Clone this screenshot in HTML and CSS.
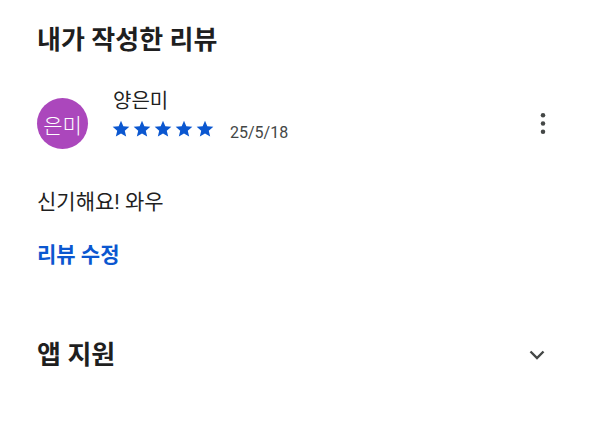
FILE: index.html
```html
<!DOCTYPE html>
<html lang="ko">
<head>
  <meta charset="utf-8">
  <title>내가 작성한 리뷰</title>
  <link rel="stylesheet" href="styles.css">
</head>
<body>
  <main class="page">
    <section class="my-review">
      <h2 class="section-title">내가 작성한 리뷰</h2>

      <div class="review-head">
        <div class="avatar">은미</div>
        <div class="review-meta">
          <div class="author">양은미</div>
          <div class="rating-row">
            <span class="stars">
              <svg viewBox="0 0 24 24"><path d="M12 17.27L18.18 21l-1.64-7.03L22 9.24l-7.19-.61L12 2 9.19 8.63 2 9.24l5.46 4.73L5.82 21z"/></svg>
              <svg viewBox="0 0 24 24"><path d="M12 17.27L18.18 21l-1.64-7.03L22 9.24l-7.19-.61L12 2 9.19 8.63 2 9.24l5.46 4.73L5.82 21z"/></svg>
              <svg viewBox="0 0 24 24"><path d="M12 17.27L18.18 21l-1.64-7.03L22 9.24l-7.19-.61L12 2 9.19 8.63 2 9.24l5.46 4.73L5.82 21z"/></svg>
              <svg viewBox="0 0 24 24"><path d="M12 17.27L18.18 21l-1.64-7.03L22 9.24l-7.19-.61L12 2 9.19 8.63 2 9.24l5.46 4.73L5.82 21z"/></svg>
              <svg viewBox="0 0 24 24"><path d="M12 17.27L18.18 21l-1.64-7.03L22 9.24l-7.19-.61L12 2 9.19 8.63 2 9.24l5.46 4.73L5.82 21z"/></svg>
            </span>
            <span class="date">25/5/18</span>
          </div>
        </div>
        <button type="button" class="icon-btn more-btn" aria-label="더보기">
          <svg viewBox="0 0 24 30"><circle cx="12" cy="5" r="2.7"/><circle cx="12" cy="15" r="2.7"/><circle cx="12" cy="25" r="2.7"/></svg>
        </button>
      </div>

      <p class="review-text">신기해요! 와우</p>
      <a href="#" class="edit-link">리뷰 수정</a>
    </section>

    <section class="app-support">
      <h2 class="section-title">앱 지원</h2>
      <button type="button" class="icon-btn expand-btn" aria-label="펼치기">
        <svg viewBox="0 0 16 10"><path d="M1.5 1.5l6.5 6.5 6.5-6.5"/></svg>
      </button>
    </section>
  </main>
</body>
</html>
```

FILE: styles.css
```css
body {
  margin: 0;
  background: #fff;
  color: #1f1f1f;
  font-family: Roboto, "Noto Sans CJK KR", sans-serif;
}

.page {
  padding: 24px 33px 0 37px;
}

.section-title {
  margin: 0;
  font-size: 26px;
  line-height: 32px;
  font-weight: 700;
}

.review-head {
  display: flex;
  align-items: flex-start;
  margin-top: 33px;
}

.avatar {
  width: 51px;
  height: 51px;
  margin-top: 9px;
  border-radius: 50%;
  background: #ab47bc;
  color: white;
  font-size: 21px;
  font-weight: 300;
  display: flex;
  align-items: center;
  justify-content: center;
}

.review-meta {
  flex: 1;
  margin-left: 25px;
}

.author {
  font-size: 20px;
  line-height: 24px;
}

.rating-row {
  display: flex;
  align-items: flex-start;
  margin-top: 6px;
}

.stars {
  display: flex;
  gap: 1px;
  margin-left: -2px;
}

.stars svg {
  width: 20px;
  height: 20px;
  fill: #0b57d0;
}

.date {
  margin: 4px 0 0 15px;
  font-size: 16px;
  line-height: 20px;
  color: #444746;
}

.icon-btn {
  border: none;
  background: none;
  padding: 0;
  width: 48px;
  height: 48px;
  display: flex;
  align-items: center;
  justify-content: center;
  cursor: pointer;
}

.more-btn {
  margin-top: 10px;
}

.more-btn svg {
  width: 20px;
  height: 25px;
  fill: #444746;
}

.review-text {
  margin: 40px 0 0;
  font-size: 21px;
  line-height: 26px;
}

.edit-link {
  display: block;
  margin-top: 27px;
  font-size: 21px;
  line-height: 26px;
  font-weight: 700;
  color: #0b57d0;
  text-decoration: none;
}

.app-support {
  display: flex;
  align-items: center;
  justify-content: space-between;
  margin-top: 63px;
}

.expand-btn {
  margin-right: 6px;
}

.expand-btn svg {
  width: 16px;
  height: 10px;
  fill: none;
  stroke: #444746;
  stroke-width: 2.4;
}
```
